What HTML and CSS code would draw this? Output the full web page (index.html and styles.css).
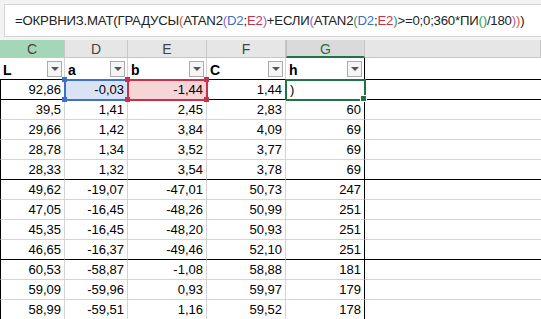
FILE: index.html
```html
<!DOCTYPE html>
<html lang="ru">

<head>
    <meta charset="UTF-8">
    <title>Лист1</title>
    <link rel="stylesheet" href="styles.css">
</head>

<body>
    <div class="formula-bar">
        <div class="formula">=ОКРВНИЗ.МАТ(ГРАДУСЫ<span class="p2">(</span>ATAN2<span class="p3">(</span><span class="ref-d">D2</span>;<span class="ref-e">E2</span><span class="p3">)</span>+ЕСЛИ<span class="p3">(</span>ATAN2<span class="p4">(</span><span class="ref-d">D2</span>;<span class="ref-e">E2</span><span class="p4">)</span>&gt;=0;0;360*ПИ<span class="p4">()</span>/180<span class="p3">)</span><span class="p2">)</span>)</div>
    </div>

    <div class="sheet">
        <div class="row head">
            <div class="hd hd-green">C</div>
            <div class="hd">D</div>
            <div class="hd">E</div>
            <div class="hd">F</div>
            <div class="hd hd-active">G</div>
            <div class="hd"></div>
        </div>

        <div class="row filters">
            <div class="cell"><b>L</b><i class="drop"></i></div>
            <div class="cell"><b>a</b><i class="drop"></i></div>
            <div class="cell"><b>b</b><i class="drop"></i></div>
            <div class="cell"><b>C</b><i class="drop"></i></div>
            <div class="cell"><b>h</b><i class="drop"></i></div>
            <div class="cell"></div>
        </div>

        <div class="row thick">
            <div class="cell">92,86</div>
            <div class="cell sel sel-blue">-0,03<span class="h tl"></span><span class="h tr"></span><span class="h bl"></span><span class="h br"></span></div>
            <div class="cell sel sel-red">-1,44<span class="h tl"></span><span class="h tr"></span><span class="h bl"></span><span class="h br"></span></div>
            <div class="cell">1,44</div>
            <div class="cell edit">)<span class="h br"></span></div>
            <div class="cell"></div>
        </div>
        <div class="row">
            <div class="cell">39,5</div>
            <div class="cell">1,41</div>
            <div class="cell">2,45</div>
            <div class="cell">2,83</div>
            <div class="cell">60</div>
            <div class="cell"></div>
        </div>
        <div class="row">
            <div class="cell">29,66</div>
            <div class="cell">1,42</div>
            <div class="cell">3,84</div>
            <div class="cell">4,09</div>
            <div class="cell">69</div>
            <div class="cell"></div>
        </div>
        <div class="row">
            <div class="cell">28,78</div>
            <div class="cell">1,34</div>
            <div class="cell">3,52</div>
            <div class="cell">3,77</div>
            <div class="cell">69</div>
            <div class="cell"></div>
        </div>
        <div class="row thick">
            <div class="cell">28,33</div>
            <div class="cell">1,32</div>
            <div class="cell">3,54</div>
            <div class="cell">3,78</div>
            <div class="cell">69</div>
            <div class="cell"></div>
        </div>
        <div class="row">
            <div class="cell">49,62</div>
            <div class="cell">-19,07</div>
            <div class="cell">-47,01</div>
            <div class="cell">50,73</div>
            <div class="cell">247</div>
            <div class="cell"></div>
        </div>
        <div class="row">
            <div class="cell">47,05</div>
            <div class="cell">-16,45</div>
            <div class="cell">-48,26</div>
            <div class="cell">50,99</div>
            <div class="cell">251</div>
            <div class="cell"></div>
        </div>
        <div class="row">
            <div class="cell">45,35</div>
            <div class="cell">-16,45</div>
            <div class="cell">-48,20</div>
            <div class="cell">50,93</div>
            <div class="cell">251</div>
            <div class="cell"></div>
        </div>
        <div class="row thick">
            <div class="cell">46,65</div>
            <div class="cell">-16,37</div>
            <div class="cell">-49,46</div>
            <div class="cell">52,10</div>
            <div class="cell">251</div>
            <div class="cell"></div>
        </div>
        <div class="row">
            <div class="cell">60,53</div>
            <div class="cell">-58,87</div>
            <div class="cell">-1,08</div>
            <div class="cell">58,88</div>
            <div class="cell">181</div>
            <div class="cell"></div>
        </div>
        <div class="row">
            <div class="cell">59,09</div>
            <div class="cell">-59,96</div>
            <div class="cell">0,93</div>
            <div class="cell">59,97</div>
            <div class="cell">179</div>
            <div class="cell"></div>
        </div>
        <div class="row">
            <div class="cell">58,99</div>
            <div class="cell">-59,51</div>
            <div class="cell">1,16</div>
            <div class="cell">59,52</div>
            <div class="cell">178</div>
            <div class="cell"></div>
        </div>
    </div>
</body>

</html>
```

FILE: styles.css
```css
body {
    font-family: "Liberation Sans", Arial, sans-serif;
    margin: 0;
    padding: 0;
    background-color: #fff;
    overflow: hidden;
}

/* formula bar */

.formula-bar {
    height: 40px;
    padding: 4px 0 3px 4px;
    box-sizing: border-box;
    background-color: #f3f3f3;
}

.formula {
    height: 33px;
    box-sizing: border-box;
    padding-left: 10px;
    background-color: #fff;
    border: 1px solid #d5d5d5;
    border-right: 0;
    font-size: 13.2px;
    letter-spacing: -0.2px;
    line-height: 31px;
    color: #222;
    white-space: nowrap;
}

.p2 {
    color: #e2553b;
}

.p3 {
    color: #9a62c4;
}

.p4 {
    color: #2f9e52;
}

.ref-d {
    color: #3a6fc4;
}

.ref-e {
    color: #c8314a;
}

/* grid */

.row {
    display: grid;
    grid-template-columns: 65px 63px 79px 79px 79px 176px;
    height: 20px;
}

.cell {
    position: relative;
    box-sizing: border-box;
    height: 20px;
    padding-right: 3px;
    border-right: 1px solid #d4d4d4;
    border-bottom: 1px solid #d4d4d4;
    font-size: 13px;
    line-height: 20px;
    text-align: right;
    color: #000;
}

.cell:nth-child(5) {
    border-right-color: #000;
}

.cell:nth-child(6) {
    border-right: 0;
}

.row:not(.head):not(.filters) .cell:first-child {
    border-left: 1px solid #000;
}

.row.thick .cell {
    border-bottom-color: #000;
}

/* column headers */

.row.head {
    height: 18px;
    background-color: #e6e6e6;
}

.hd {
    box-sizing: border-box;
    height: 18px;
    border-right: 1px solid #c6c6c6;
    border-bottom: 1px solid #c6c6c6;
    font-size: 14px;
    line-height: 18px;
    text-align: center;
    color: #444;
}

.hd-green {
    background-color: #a3d7b8;
}

.hd-active {
    background-color: #dadada;
    border-left: 1px solid #bcbcbc;
    border-bottom: 2px solid #217346;
    color: #217346;
}

/* filter row */

.row.filters {
    height: 22px;
}

.filters .cell {
    display: flex;
    align-items: center;
    justify-content: space-between;
    height: 22px;
    padding: 0 2px 0 3px;
    border-bottom-color: #000;
    font-size: 14px;
    text-align: left;
}

.filters b {
    padding-top: 3px;
}

.drop {
    position: relative;
    width: 15px;
    height: 16px;
    box-sizing: border-box;
    margin-top: 1px;
    border: 1px solid #ababab;
    background-color: #f5f5f5;
}

.drop::after {
    content: "";
    position: absolute;
    left: 3px;
    top: 5px;
    border-left: 4px solid transparent;
    border-right: 4px solid transparent;
    border-top: 4px solid #555;
}

/* selections */

.sel,
.edit {
    outline-offset: -1px;
}

.sel-blue {
    background-color: #dae3f4;
    outline: 2px solid #3f6fc6;
}

.sel-red {
    background-color: #f6d5d7;
    outline: 2px solid #c8314a;
}

.edit {
    outline: 2px solid #217346;
    padding-left: 4px;
    text-align: left;
}

.h {
    position: absolute;
    width: 5px;
    height: 5px;
    z-index: 2;
}

.sel-blue .h {
    background-color: #3f6fc6;
}

.sel-red .h {
    background-color: #c8314a;
}

.edit .h {
    background-color: #217346;
    border: 1px solid #fff;
}

.h.tl {
    left: -3px;
    top: -3px;
}

.h.tr {
    right: -3px;
    top: -3px;
}

.h.bl {
    left: -3px;
    bottom: -3px;
}

.h.br {
    right: -3px;
    bottom: -3px;
}
```
